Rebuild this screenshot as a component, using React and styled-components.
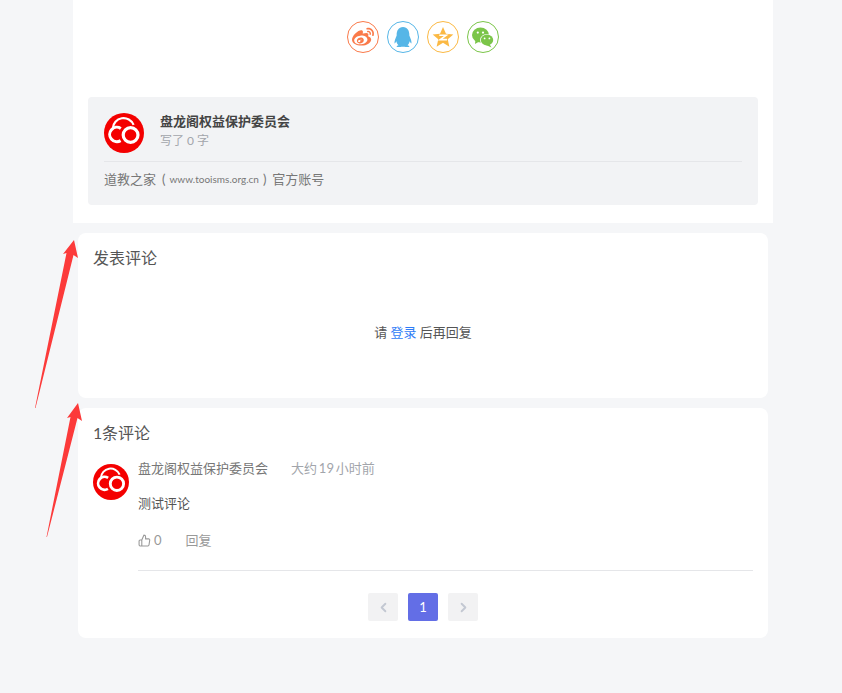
import React from 'react';
import styled, { createGlobalStyle } from 'styled-components';
import { RiWeiboFill, RiQqFill } from 'react-icons/ri';
import { FiChevronLeft, FiChevronRight, FiThumbsUp } from 'react-icons/fi';

const GlobalStyle = createGlobalStyle`
    html, body {
        margin: 0;
        padding: 0;
        background: #f5f6f8;
    }
    body {
        font-family: Lato, "Noto Sans CJK SC", sans-serif;
        color: #555;
    }
`;

const Page = styled.div`
    position: relative;
    width: 842px;
    height: 693px;
    overflow: hidden;
`;

const Article = styled.div`
    width: 700px;
    height: 223px;
    margin-left: 73px;
    padding: 0 15px 18px;
    box-sizing: border-box;
    background: #fff;
    display: flex;
    flex-direction: column;
    justify-content: flex-end;
`;

const ShareRow = styled.div`
    display: flex;
    justify-content: center;
    gap: 8px;
    margin-bottom: 44px;
`;

const ShareIcon = styled.div`
    width: 32px;
    height: 32px;
    box-sizing: border-box;
    border-radius: 50%;
    border: 1px solid ${(p) => p.$color};
    color: ${(p) => p.$color};
    display: flex;
    align-items: center;
    justify-content: center;
`;

const AuthorBox = styled.div`
    height: 108px;
    box-sizing: border-box;
    padding: 16px 16px 0;
    background: #f2f3f5;
    border-radius: 4px;
`;

const AuthorTop = styled.div`
    display: flex;
    align-items: flex-start;
    gap: 16px;
    height: 48px;
    border-bottom: 1px solid #e5e6e9;
`;

const AuthorInfo = styled.div`
    display: flex;
    flex-direction: column;
    margin-top: -1px;
`;

const AuthorName = styled.div`
    font-size: 13px;
    line-height: 18px;
    font-weight: 700;
    color: #444;
`;

const AuthorCount = styled.div`
    margin-top: 2px;
    font-size: 12px;
    line-height: 18px;
    color: #a2a5ab;
`;

const AuthorNote = styled.div`
    display: flex;
    align-items: center;
    margin-top: 8px;
    font-size: 13px;
    line-height: 18px;
    color: #777;
`;

const Site = styled.span`
    font-size: 10px;
    margin: 0 -2px;
`;

const Paren = styled.span`
    margin: 0 6px;
`;

const Card = styled.div`
    width: 690px;
    height: ${(p) => p.$height}px;
    margin: 10px 0 0 78px;
    padding: 15px;
    box-sizing: border-box;
    background: #fff;
    border-radius: 8px;
`;

const CardTitle = styled.div`
    font-size: 16px;
    line-height: 20px;
    color: #555;
`;

const Count = styled.span`
    display: inline-block;
    width: 9px;
`;

const LoginHint = styled.div`
    margin-top: 54px;
    text-align: center;
    font-size: 13px;
    line-height: 20px;
    color: #555;
`;

const LoginLink = styled.a`
    color: #2f7cf6;
    text-decoration: none;
`;

const Comment = styled.div`
    display: flex;
    gap: 9px;
    margin-top: 21px;
`;

const CommentBody = styled.div`
    flex: 1;
    margin-top: -5px;
`;

const CommentMeta = styled.div`
    display: flex;
    gap: 23px;
    font-size: 13px;
    line-height: 18px;
    color: #777;
`;

const CommentTime = styled.span`
    color: #a2a5ab;
    word-spacing: -1.5px;
`;

const CommentText = styled.div`
    margin-top: 17px;
    font-size: 13px;
    line-height: 18px;
    color: #555;
`;

const Actions = styled.div`
    display: flex;
    align-items: center;
    gap: 24px;
    margin-top: 19px;
    padding-bottom: 21px;
    border-bottom: 1px solid #e5e6e9;
    font-size: 13px;
    line-height: 18px;
    color: #999;
`;

const Like = styled.span`
    display: flex;
    align-items: center;
    gap: 3px;
`;

const Pagination = styled.div`
    display: flex;
    justify-content: center;
    gap: 10px;
    margin-top: 22px;
`;

const PageButton = styled.div`
    width: 30px;
    height: 28px;
    border-radius: 2px;
    display: flex;
    align-items: center;
    justify-content: center;
    font-size: 13px;
    background: ${(p) => (p.$active ? '#636ee6' : '#f2f2f3')};
    color: ${(p) => (p.$active ? '#fff' : '#c3c8d2')};
`;

const ArrowLayer = styled.svg`
    position: absolute;
    left: 0;
    top: 0;
    pointer-events: none;
`;

const LogoMark = styled.svg`
    flex-shrink: 0;
`;

const Logo = ({ size }) => (
    <LogoMark width={size} height={size} viewBox="0 0 40 40">
        <circle cx="20" cy="20" r="20" fill="#f40000" />
        <path d="M8.8 15.4 A10.8 10.8 0 0 1 29.6 11.8" fill="none" stroke="#fff" strokeWidth="2.2" />
        <path d="M16.6 27.6 A7.2 7.2 0 1 1 16.8 15.4" fill="none" stroke="#fff" strokeWidth="3" />
        <circle cx="26.6" cy="22" r="7.4" fill="none" stroke="#fff" strokeWidth="3.2" />
    </LogoMark>
);

const QzoneIcon = () => (
    <svg width="22" height="22" viewBox="0 0 20 20">
        <polygon points="10,0.8 12.7,7 19.4,7.7 14.3,12 15.8,18.8 10,15.2 4.2,18.8 5.7,12 0.6,7.7 7.3,7" fill="#fbb944" />
        <path d="M6.6 8.4 H13 L7.4 12.4 H13.6" fill="none" stroke="#fff" strokeWidth="1.4" />
    </svg>
);

const WechatIcon = () => (
    <svg width="24" height="24" viewBox="0 0 24 24">
        <ellipse cx="9.5" cy="10" rx="8.5" ry="7.4" fill="#7bc549" />
        <polygon points="4.5,14 4,19 9,16" fill="#7bc549" />
        <ellipse cx="16" cy="15" rx="7" ry="6" fill="#fff" />
        <ellipse cx="16" cy="15" rx="6.2" ry="5.4" fill="#7bc549" />
        <polygon points="18.5,19 20.5,22.5 15,20" fill="#7bc549" />
        <circle cx="6.8" cy="7.6" r="1.1" fill="#fff" />
        <circle cx="12" cy="7.6" r="1.1" fill="#fff" />
        <circle cx="13.6" cy="13.4" r="0.9" fill="#fff" />
        <circle cx="18.4" cy="13.4" r="0.9" fill="#fff" />
    </svg>
);

export default function App() {
    return (
        <Page>
            <GlobalStyle />
            <Article>
                <ShareRow>
                    <ShareIcon $color="#fa7a4a"><RiWeiboFill size={24} /></ShareIcon>
                    <ShareIcon $color="#56b6e7"><RiQqFill size={24} /></ShareIcon>
                    <ShareIcon $color="#fbb944"><QzoneIcon /></ShareIcon>
                    <ShareIcon $color="#7bc549"><WechatIcon /></ShareIcon>
                </ShareRow>
                <AuthorBox>
                    <AuthorTop>
                        <Logo size={40} />
                        <AuthorInfo>
                            <AuthorName>盘龙阁权益保护委员会</AuthorName>
                            <AuthorCount>写了 0 字</AuthorCount>
                        </AuthorInfo>
                    </AuthorTop>
                    <AuthorNote>
                        道教之家<Paren>(</Paren><Site>www.tooisms.org.cn</Site><Paren>)</Paren>官方账号
                    </AuthorNote>
                </AuthorBox>
            </Article>

            <Card $height={165}>
                <CardTitle>发表评论</CardTitle>
                <LoginHint>请 <LoginLink href="#">登录</LoginLink> 后再回复</LoginHint>
            </Card>

            <Card $height={230}>
                <CardTitle><Count>1</Count>条评论</CardTitle>
                <Comment>
                    <Logo size={36} />
                    <CommentBody>
                        <CommentMeta>
                            <span>盘龙阁权益保护委员会</span>
                            <CommentTime>大约 19 小时前</CommentTime>
                        </CommentMeta>
                        <CommentText>测试评论</CommentText>
                        <Actions>
                            <Like><FiThumbsUp size={13} />0</Like>
                            <span>回复</span>
                        </Actions>
                    </CommentBody>
                </Comment>
                <Pagination>
                    <PageButton><FiChevronLeft size={15} strokeWidth={3} /></PageButton>
                    <PageButton $active>1</PageButton>
                    <PageButton><FiChevronRight size={15} strokeWidth={3} /></PageButton>
                </Pagination>
            </Card>

            <ArrowLayer width="842" height="693" viewBox="0 0 842 693">
                <polygon points="74,240 78,258 73.5,255 35.5,408 35,408 66.5,253 63,254" fill="#fc3a3a" />
                <polygon points="78,403 82,421 77.5,418 47,537 46.5,537 70.5,417 67,418" fill="#fc3a3a" />
            </ArrowLayer>
        </Page>
    );
}
